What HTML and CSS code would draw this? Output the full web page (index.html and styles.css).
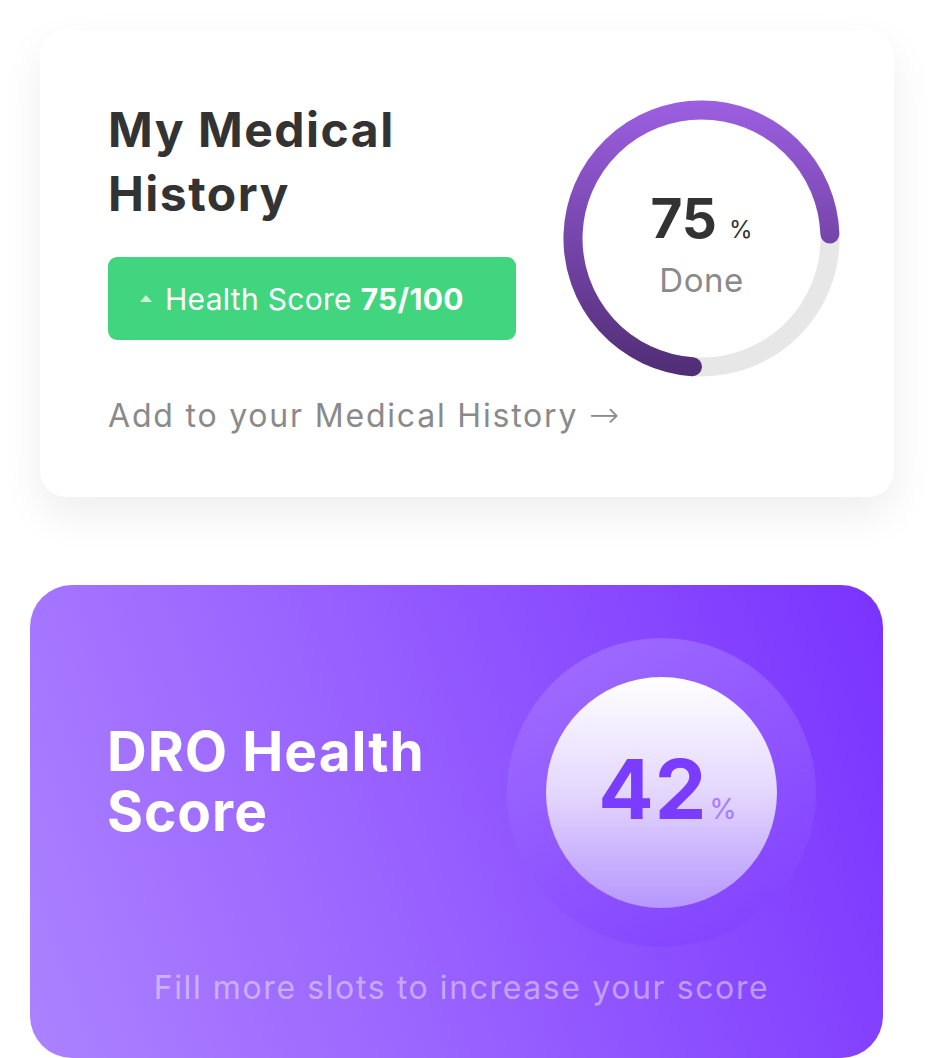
FILE: index.html
```html
<!DOCTYPE html>
<html lang="en">
<head>
    <meta charset="UTF-8">
    <meta name="viewport" content="width=device-width, initial-scale=1.0">
    <title>Medical History</title>
    <link rel="stylesheet" href="styles.css">
</head>
<body>

    <!-- Medical history card -->
    <section class="card history">
        <div class="history-info">
            <h1 class="history-title">My Medical<br>History</h1>
            <div class="score-pill">
                <span class="pill-arrow"></span>
                <span>Health Score <b>75/100</b></span>
            </div>
            <a class="history-link" href="#">Add to your Medical History <span class="link-arrow">&rarr;</span></a>
        </div>
        <div class="progress-ring">
            <svg width="277" height="277" viewBox="0 0 277 277">
                <defs>
                    <linearGradient id="ringGrad" x1="0" y1="0" x2="0" y2="277" gradientUnits="userSpaceOnUse">
                        <stop offset="0" stop-color="#9d5fe2"/>
                        <stop offset="1" stop-color="#502d74"/>
                    </linearGradient>
                </defs>
                <circle cx="138.5" cy="138.5" r="128.5" fill="none" stroke="#e7e7e7" stroke-width="19"/>
                <!-- 75% arc: from just past 6 o'clock, round the left, to 3 o'clock -->
                <path d="M 129.5 266.7 A 128.5 128.5 0 1 1 266.9 134" fill="none" stroke="url(#ringGrad)"
                      stroke-width="19" stroke-linecap="round"/>
            </svg>
            <div class="ring-label">
                <div class="ring-value">75<span class="ring-unit">%</span></div>
                <div class="ring-done">Done</div>
            </div>
        </div>
    </section>

    <!-- DRO health score card -->
    <section class="card dro">
        <div class="dro-main">
            <h2 class="dro-title">DRO Health<br>Score</h2>
            <div class="dro-halo">
                <div class="dro-circle">
                    <span class="dro-value">42</span><span class="dro-unit">%</span>
                </div>
            </div>
        </div>
        <p class="dro-hint">Fill more slots to increase your score</p>
    </section>

</body>
</html>
```

FILE: styles.css
```css
body {
    margin: 0;
    background: #fff;
    font-family: "Inter", "Open Sans", sans-serif;
}

.card {
    box-sizing: border-box;
}

/* Medical history */
.history {
    display: flex;
    justify-content: space-between;
    width: 854px;
    height: 467px;
    margin: 30px 0 0 40px;
    padding: 70px 54px 0 68px;
    background: #fff;
    border-radius: 26px;
    box-shadow: 0 18px 44px rgba(0, 0, 0, 0.07);
}

.history-info {
    flex: 0 0 420px;
    min-width: 0;
}

.history-title {
    margin: -2px 0 0;
    color: #333;
    font-size: 48px;
    font-weight: 700;
    line-height: 64px;
    letter-spacing: 1.5px;
}

.score-pill {
    display: flex;
    align-items: center;
    width: 408px;
    height: 83px;
    margin-top: 31px;
    padding-left: 32px;
    box-sizing: border-box;
    background: #42d57f;
    border-radius: 9px;
    color: #fff;
    font-size: 30px;
    letter-spacing: 0.3px;
}

.score-pill b {
    font-weight: 700;
}

.pill-arrow {
    width: 0;
    height: 0;
    margin-right: 13px;
    border-left: 6.5px solid transparent;
    border-right: 6.5px solid transparent;
    border-bottom: 7px solid rgba(255, 255, 255, 0.7);
}

.history-link {
    display: block;
    margin-top: 55px;
    color: #8a8a8a;
    font-size: 32px;
    line-height: 40px;
    letter-spacing: 1.8px;
    white-space: nowrap;
    text-decoration: none;
}

.link-arrow {
    font-family: "DejaVu Sans", sans-serif;
    font-size: 36px;
    font-weight: 300;
    letter-spacing: 0;
}

.progress-ring {
    display: grid;
    flex: 0 0 277px;
    height: 277px;
}

.progress-ring svg,
.ring-label {
    grid-area: 1 / 1;
}

.ring-label {
    display: flex;
    flex-direction: column;
    align-items: center;
    justify-content: center;
    padding-top: 10px;
}

.ring-value {
    color: #333;
    font-size: 55px;
    font-weight: 700;
    line-height: 60px;
}

.ring-unit {
    margin-left: 12px;
    font-size: 24px;
    font-weight: 400;
}

.ring-done {
    color: #8a8a8a;
    font-size: 33px;
    line-height: 40px;
    letter-spacing: 0.5px;
}

/* DRO health score */
.dro {
    width: 853px;
    height: 473px;
    margin: 88px 0 0 30px;
    padding: 53px 67px 0 77px;
    border-radius: 42px;
    background: linear-gradient(70deg, #ac82ff 0%, #9a64ff 40%, #7a33ff 100%);
}

.dro-main {
    display: flex;
    justify-content: space-between;
    align-items: center;
}

.dro-title {
    margin: 0 0 24px;
    color: #fff;
    font-size: 55px;
    font-weight: 700;
    line-height: 60px;
    letter-spacing: 1px;
}

.dro-halo {
    display: flex;
    align-items: center;
    justify-content: center;
    width: 309px;
    height: 309px;
    border-radius: 50%;
    background: linear-gradient(180deg, rgba(255, 255, 255, 0.17), rgba(110, 40, 255, 0.2));
}

.dro-circle {
    display: flex;
    align-items: baseline;
    justify-content: center;
    width: 231px;
    height: 231px;
    box-sizing: border-box;
    padding: 68px 0 0 12px;
    border-radius: 50%;
    background: linear-gradient(180deg, #fff 0%, #e4d7fd 50%, #b696fd 100%);
}

.dro-value {
    color: #7a3cff;
    font-size: 82px;
    font-weight: 700;
    line-height: 90px;
    letter-spacing: 1px;
}

.dro-unit {
    margin-left: 2px;
    color: #a67cff;
    font-size: 28px;
}

.dro-hint {
    margin: 21px 0 0;
    color: rgba(255, 255, 255, 0.45);
    font-size: 32px;
    line-height: 40px;
    letter-spacing: 1.6px;
    text-align: center;
}
```
